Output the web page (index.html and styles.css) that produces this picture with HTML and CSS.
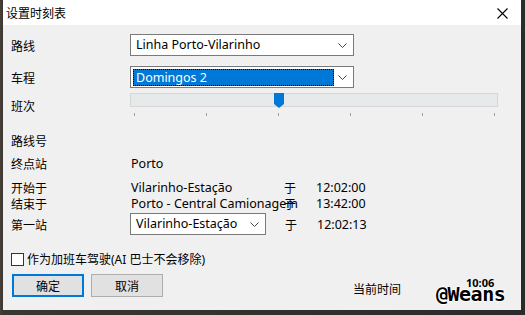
FILE: index.html
```html
<!DOCTYPE html>
<html lang="zh">
<head>
  <meta charset="UTF-8">
  <title>设置时刻表</title>
  <link rel="stylesheet" href="styles.css">
</head>
<body>
  <div class="window">
    <div class="titlebar">
      <span class="title">设置时刻表</span>
      <svg class="close" width="11" height="11" viewBox="0 0 11 11"><path d="M0.5 0.5L10.5 10.5M10.5 0.5L0.5 10.5" stroke="#000" stroke-width="1.1"/></svg>
    </div>

    <div class="content">
      <!-- 路线 -->
      <div class="row row-route">
        <span class="label">路线</span>
        <div class="select wide">
          <span class="select-text">Linha Porto-Vilarinho</span>
          <svg class="chev" width="9" height="5" viewBox="0 0 9 5"><polyline points="0.5,0.5 4.5,4.5 8.5,0.5" fill="none" stroke="#444" stroke-width="1"/></svg>
        </div>
      </div>

      <!-- 车程 -->
      <div class="row row-trip">
        <span class="label">车程</span>
        <div class="select wide">
          <span class="select-text selected">Domingos 2</span>
          <svg class="chev" width="9" height="5" viewBox="0 0 9 5"><polyline points="0.5,0.5 4.5,4.5 8.5,0.5" fill="none" stroke="#444" stroke-width="1"/></svg>
        </div>
      </div>

      <!-- 班次 滑块 -->
      <div class="row row-slider">
        <span class="label">班次</span>
        <div class="slider">
          <div class="track">
            <svg class="thumb" width="10" height="15" viewBox="0 0 10 15"><path d="M0 0H10V11L5 15L0 11Z" fill="#0078d7"/></svg>
          </div>
          <div class="ticks">
            <i></i><i></i><i></i><i></i><i></i><i></i>
          </div>
        </div>
      </div>

      <div class="row row-text row-lineno">
        <span class="label">路线号</span>
      </div>

      <div class="row row-text row-dest">
        <span class="label">终点站</span>
        <span class="value">Porto</span>
      </div>

      <div class="row row-text row-start">
        <span class="label">开始于</span>
        <span class="value">Vilarinho-Estação</span>
        <span class="at">于</span>
        <span class="time">12:02:00</span>
      </div>

      <div class="row row-text">
        <span class="label">结束于</span>
        <span class="value">Porto - Central Camionagem</span>
        <span class="at">于</span>
        <span class="time">13:42:00</span>
      </div>

      <div class="row row-first">
        <span class="label">第一站</span>
        <div class="select narrow">
          <span class="select-text">Vilarinho-Estação</span>
          <svg class="chev" width="9" height="5" viewBox="0 0 9 5"><polyline points="0.5,0.5 4.5,4.5 8.5,0.5" fill="none" stroke="#444" stroke-width="1"/></svg>
        </div>
        <span class="at">于</span>
        <span class="time">12:02:13</span>
      </div>

      <div class="row row-check">
        <span class="checkbox"></span>
        <span class="check-label">作为加班车驾驶(AI 巴士不会移除)</span>
      </div>

      <div class="row row-buttons">
        <button class="btn primary">确定</button>
        <button class="btn">取消</button>
        <span class="now-label">当前时间</span>
        <span class="now-time">10:06</span>
      </div>
    </div>

    <span class="watermark">@Weans</span>
  </div>
</body>
</html>
```

FILE: styles.css
```css
html, body {
  margin: 0;
  padding: 0;
}
body {
  width: 525px;
  height: 315px;
  overflow: hidden;
  background: linear-gradient(90deg, #4a4038 0, #3a3632 3px, #2b2b2b 100%);
  font-family: "Noto Sans", "Noto Sans CJK SC", sans-serif;
  font-size: 12.5px;
  color: #000;
}

/* 窗口 */
.window {
  position: relative;
  margin-left: 3px;
  width: 518px;
  height: 310px;
  background: #f0f0f0;
}

.titlebar {
  height: 25px;
  background: #fff;
  display: flex;
  align-items: center;
  justify-content: space-between;
  padding: 0 13px 0 3px;
}
.title {
  font-family: "Noto Sans CJK SC", sans-serif;
  font-size: 12px;
  margin-top: -1px;
}
.close {
  margin-top: 1px;
}

.content {
  padding: 0 0 0 8px;
  display: flex;
  flex-direction: column;
}

/* 行 */
.row {
  display: flex;
  align-items: center;
}
.label {
  width: 119px;
  flex-shrink: 0;
  font-family: "Noto Sans CJK SC", sans-serif;
  font-size: 12px;
}
.row-route { height: 22px; margin-top: 9px; }
.row-trip { height: 22px; margin-top: 10px; }
.row-slider { height: 24px; margin-top: 5px; }
.row-text { height: 16px; }
.row-lineno { margin-top: 15px; }
.row-dest { margin-top: 7px; }
.row-start { margin-top: 8px; }
.row-first { height: 22px; margin-top: 2px; }
.row-check { height: 16px; margin-top: 16px; }
.row-buttons { height: 23px; margin-top: 7px; }

.value {
  width: 154px;
  flex-shrink: 0;
  white-space: nowrap;
  padding-left: 1px;
}
.at {
  width: 32px;
  flex-shrink: 0;
  font-family: "Noto Sans CJK SC", sans-serif;
  font-size: 12px;
}
.row-text .at {
  margin-left: -1px;
}

/* 下拉框 */
.select {
  box-sizing: border-box;
  height: 22px;
  background: #fff;
  border: 1px solid #7a7a7a;
  display: flex;
  align-items: center;
  justify-content: space-between;
  padding: 0 6px 0 2px;
}
.select.wide { width: 224px; }
.select.narrow { width: 136px; margin-right: 19px; }
.select-text {
  padding: 0 3px;
  line-height: 16px;
  white-space: nowrap;
}
.select-text.selected {
  background: #0078d7;
  color: #fff;
  width: 195px;
  outline: 1px dotted #000;
  outline-offset: -1px;
  line-height: 17px;
}

/* 滑块 */
.slider {
  width: 368px;
  display: flex;
  flex-direction: column;
  align-self: flex-start;
}
.track {
  position: relative;
  box-sizing: border-box;
  height: 14px;
  background: #e7eaea;
  border: 1px solid #d6d6d6;
}
.thumb {
  position: absolute;
  left: 143px;
  top: -1px;
}
.ticks {
  display: flex;
  justify-content: space-between;
  padding: 6px 3px 0 4px;
}
.ticks i {
  width: 1px;
  height: 3px;
  background: #a0a0a0;
}

/* 复选框 */
.checkbox {
  box-sizing: border-box;
  width: 13px;
  height: 13px;
  background: #fff;
  border: 1px solid #333;
  margin: 0 3px 0 0;
}
.check-label {
  font-family: "Noto Sans", "Noto Sans CJK SC", sans-serif;
  font-size: 12px;
}

/* 按钮 */
.btn {
  box-sizing: border-box;
  width: 72px;
  height: 23px;
  margin: 0 8px 0 1px;
  padding: 0;
  background: #e1e1e1;
  border: 1px solid #adadad;
  font-family: "Noto Sans CJK SC", sans-serif;
  font-size: 12px;
  color: #000;
}
.btn.primary {
  border: 2px solid #0078d7;
  margin-right: 7px;
}
.btn + .btn {
  margin-left: 0;
}
.now-label {
  margin-left: 182px;
  font-family: "Noto Sans CJK SC", sans-serif;
  font-size: 12px;
  margin-top: 5px;
}
.now-time {
  margin-left: 65px;
  margin-top: -6px;
  font-size: 11px;
  font-weight: bold;
}

/* 水印 */
.watermark {
  position: absolute;
  left: 433px;
  top: 282px;
  font-family: "DejaVu Sans Mono", monospace;
  font-weight: bold;
  font-size: 20px;
  letter-spacing: -0.5px;
  color: #000;
  text-shadow: 1px 0 #fff, -1px 0 #fff, 0 1px #fff, 0 -1px #fff;
}
```
